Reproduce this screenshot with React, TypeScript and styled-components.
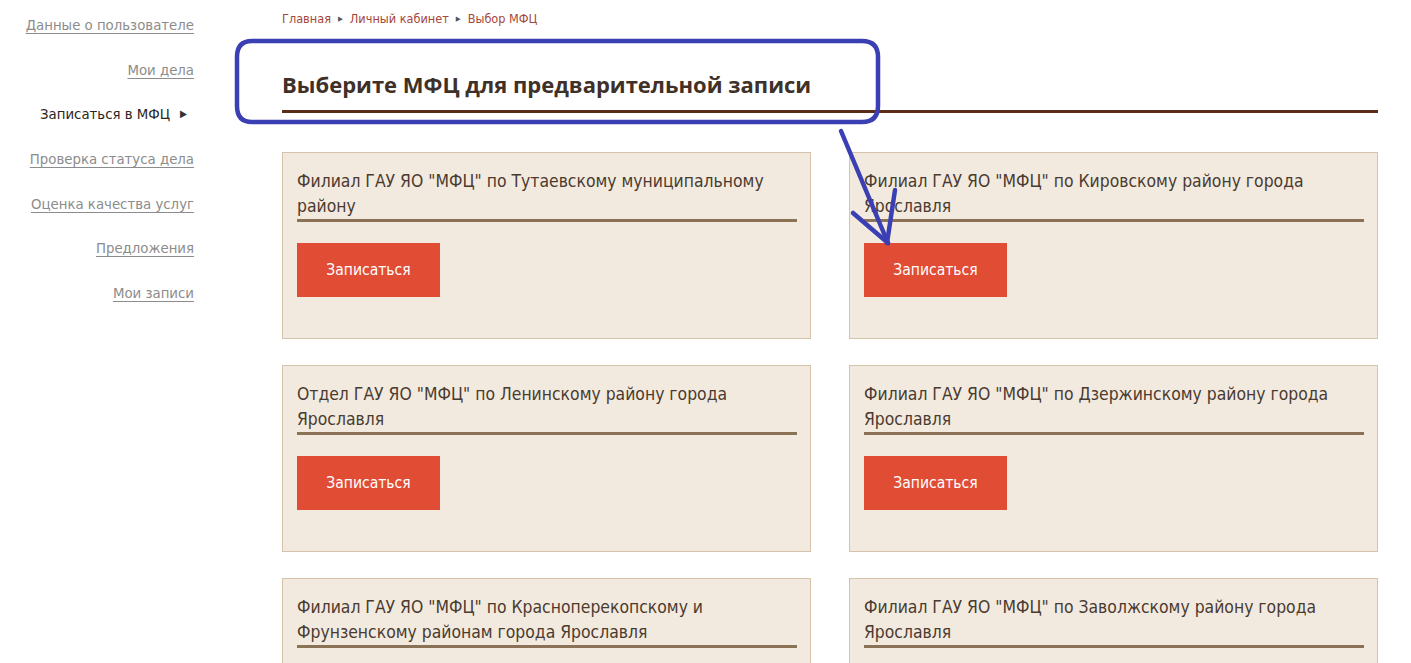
import React from 'react';
import styled, { createGlobalStyle } from 'styled-components';

const GlobalStyle = createGlobalStyle`
  html, body {
    margin: 0;
    padding: 0;
    background: #fff;
  }
  body {
    font-family: "DejaVu Sans Condensed", "DejaVu Sans", "Liberation Sans", sans-serif;
    font-stretch: condensed;
    overflow: hidden;
  }
`;

const Page = styled.div`
  position: relative;
  display: flex;
  gap: 88px;
  width: 1411px;
  height: 663px;
  overflow: hidden;
`;

const Sidebar = styled.nav`
  width: 194px;
  flex-shrink: 0;
  display: flex;
  flex-direction: column;
  align-items: flex-end;
  padding-top: 13px;
  gap: 21.7px;
`;

const NavLink = styled.a<{ $active?: boolean }>`
  display: flex;
  align-items: center;
  gap: 10px;
  height: 23px;
  font-size: 14.8px;
  color: ${(p) => (p.$active ? '#2b2420' : '#8c8c8c')};
  text-decoration: ${(p) => (p.$active ? 'none' : 'underline')};
  text-underline-offset: 3px;
  text-decoration-thickness: 1px;
  margin-right: ${(p) => (p.$active ? '7px' : '0')};
  white-space: nowrap;
`;

const ActiveArrow = styled.span`
  font-size: 10px;
  color: #333;
`;

const Main = styled.main`
  width: 1096px;
  flex-shrink: 0;
  display: flex;
  flex-direction: column;
`;

const Crumbs = styled.div`
  display: flex;
  align-items: center;
  gap: 7px;
  height: 20px;
  margin-top: 11px;
  font-size: 12.6px;
  color: #a5473a;
`;

const CrumbSep = styled.span`
  font-size: 7px;
  color: #555;
`;

const Heading = styled.h1`
  margin: 0;
  margin-top: 43px;
  padding-bottom: 11px;
  border-bottom: 3px solid #5b2c19;
  font-family: "Open Sans", "Noto Sans", sans-serif;
  font-stretch: normal;
  font-weight: 700;
  font-size: 22px;
  line-height: 30px;
  color: #3f3128;
`;

const Grid = styled.div`
  display: grid;
  grid-template-columns: 1fr 1fr;
  column-gap: 38px;
  row-gap: 26px;
  margin-top: 39px;
`;

const Card = styled.section`
  box-sizing: border-box;
  height: 187px;
  padding: 16px 13px 0 14px;
  background: #f3eadf;
  border: 1px solid #d5c3ad;
`;

const CardTitle = styled.div`
  font-size: 17.4px;
  line-height: 25px;
  color: #4a3b30;
  white-space: pre;
  border-bottom: 3px solid #8b7256;
`;

const Button = styled.button`
  display: block;
  width: 143px;
  height: 54px;
  margin-top: 21px;
  border: none;
  background: #e14c35;
  color: #fff;
  font-family: inherit;
  font-stretch: condensed;
  font-size: 15.5px;
  cursor: pointer;
`;

const Annotation = styled.svg`
  position: absolute;
  left: 0;
  top: 0;
  pointer-events: none;
`;

const navItems = [
  { label: 'Данные о пользователе' },
  { label: 'Мои дела' },
  { label: 'Записаться в МФЦ', active: true },
  { label: 'Проверка статуса дела' },
  { label: 'Оценка качества услуг' },
  { label: 'Предложения' },
  { label: 'Мои записи' },
];

const offices = [
  'Филиал ГАУ ЯО "МФЦ" по Тутаевскому муниципальному\nрайону',
  'Филиал ГАУ ЯО "МФЦ" по Кировскому району города\nЯрославля',
  'Отдел ГАУ ЯО "МФЦ" по Ленинскому району города\nЯрославля',
  'Филиал ГАУ ЯО "МФЦ" по Дзержинскому району города\nЯрославля',
  'Филиал ГАУ ЯО "МФЦ" по Красноперекопскому и\nФрунзенскому районам города Ярославля',
  'Филиал ГАУ ЯО "МФЦ" по Заволжскому району города\nЯрославля',
];

const App: React.FC = () => {
  return (
    <>
      <GlobalStyle />
      <Page>
        <Sidebar>
          {navItems.map((item) => (
            <NavLink key={item.label} $active={item.active}>
              {item.label}
              {item.active && <ActiveArrow>▶</ActiveArrow>}
            </NavLink>
          ))}
        </Sidebar>
        <Main>
          <Crumbs>
            <span>Главная</span>
            <CrumbSep>▶</CrumbSep>
            <span>Личный кабинет</span>
            <CrumbSep>▶</CrumbSep>
            <span>Выбор МФЦ</span>
          </Crumbs>
          <Heading>Выберите МФЦ для предварительной записи</Heading>
          <Grid>
            {offices.map((name) => (
              <Card key={name}>
                <CardTitle>{name}</CardTitle>
                <Button>Записаться</Button>
              </Card>
            ))}
          </Grid>
        </Main>

        {/* hand-drawn annotation over the screenshot */}
        <Annotation width="1411" height="663" viewBox="0 0 1411 663">
          <g fill="none" stroke="#3b3fb4" strokeWidth="4.5" strokeLinecap="round" strokeLinejoin="round">
            <path d="M252 41 H862 Q878 41 878 57 V106 Q878 122 862 122 H252 Q237 122 237 106 V57 Q237 41 252 41 Z" />
            <path d="M841 131 L888 243" />
            <path d="M853 213 L888 243" />
            <path d="M895 190 L887 243" />
          </g>
        </Annotation>
      </Page>
    </>
  );
};

export default App;
